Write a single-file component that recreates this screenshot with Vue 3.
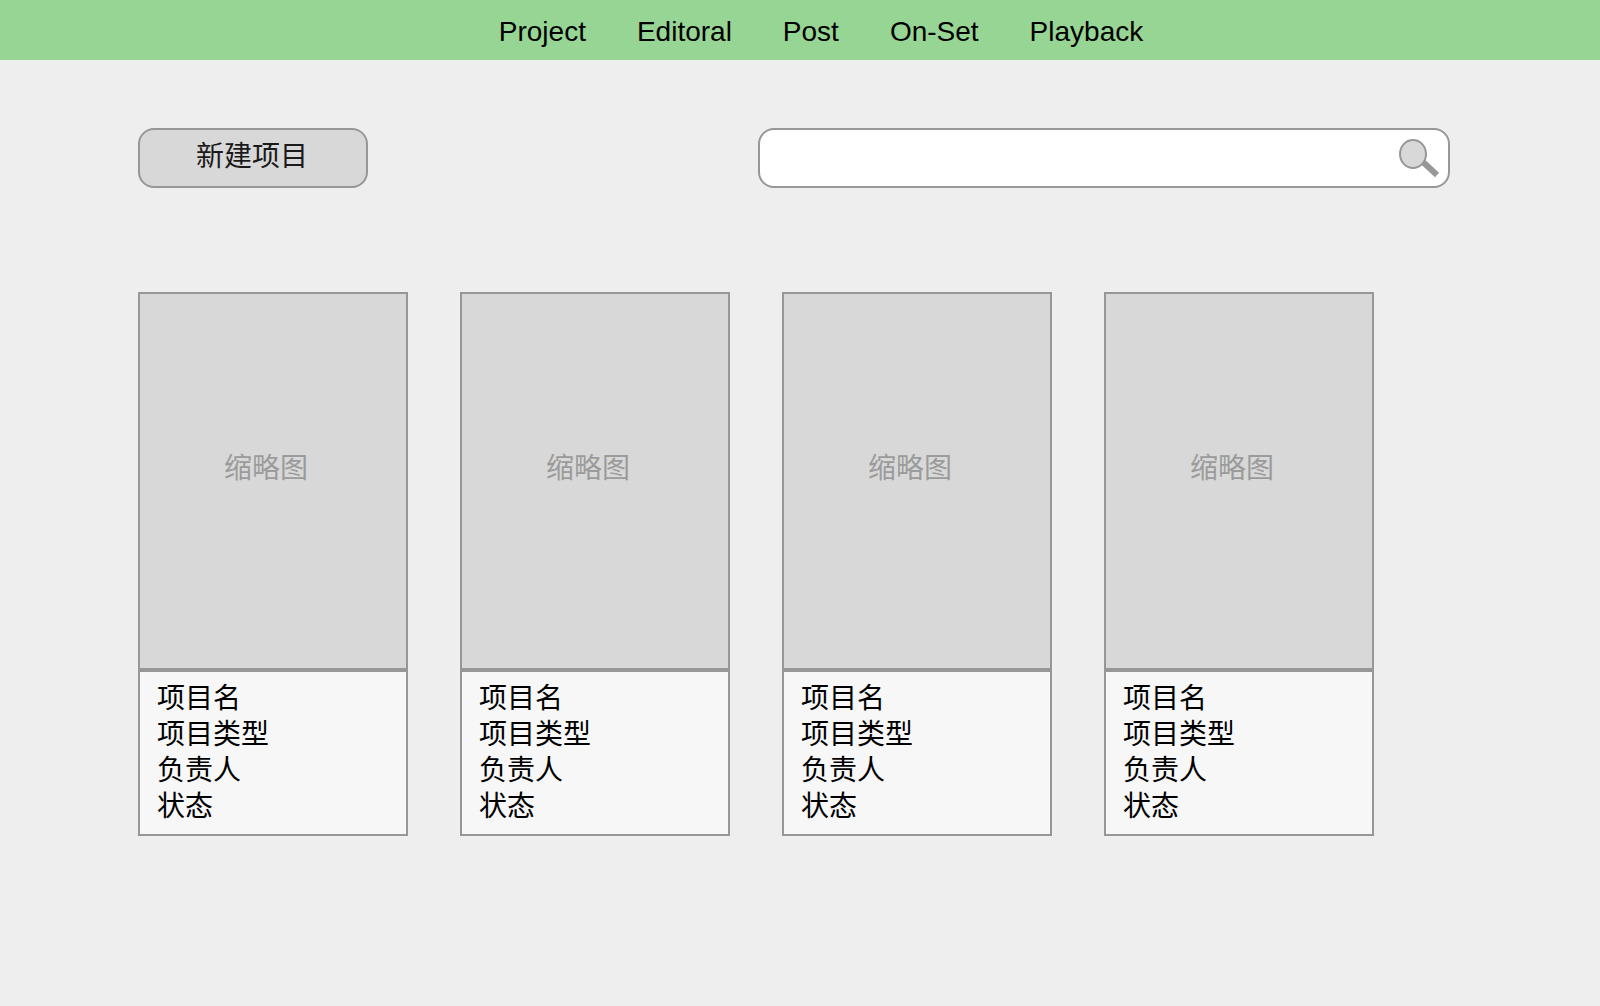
<script setup>
import { ref } from 'vue'

const query = ref('')
const links = ['Project', 'Editoral', 'Post', 'On-Set', 'Playback']
const fields = ['项目名', '项目类型', '负责人', '状态']
const projects = [1, 2, 3, 4]
</script>

<template>
  <div class="page">
    <header class="topbar">
      <nav class="nav">
        <a v-for="link in links" :key="link" href="#">{{ link }}</a>
      </nav>
    </header>

    <main class="content">
      <div class="toolbar">
        <button type="button" class="create">新建项目</button>
        <form class="search" role="search" @submit.prevent>
          <input v-model="query" type="text" aria-label="搜索" />
          <button type="submit" class="search-button" aria-label="搜索">
            <svg width="42" height="42" viewBox="0 0 42 42" aria-hidden="true">
              <path d="M25 25 L39 38" stroke="#979797" stroke-width="6" />
              <ellipse cx="15" cy="17" rx="13" ry="14" fill="#d8d8d8" stroke="#979797" stroke-width="2" />
            </svg>
          </button>
        </form>
      </div>

      <section class="cards">
        <article v-for="project in projects" :key="project" class="card">
          <div class="thumb">缩略图</div>
          <ul class="info">
            <li v-for="field in fields" :key="field">{{ field }}</li>
          </ul>
        </article>
      </section>
    </main>
  </div>
</template>

<style>
html,
body {
  background: #eeeeee;
}
</style>

<style scoped>
.page {
  font-family: "Liberation Sans", "Noto Sans CJK SC", sans-serif;
  font-size: 28px;
  line-height: 36px;
  color: #000;
}

.page * {
  box-sizing: border-box;
}

.topbar {
  display: flex;
  justify-content: center;
  padding: 14px 0 10px 42px;
  background: #97d594;
}

.nav {
  display: flex;
  gap: 51px;
}

.nav a {
  color: inherit;
  text-decoration: none;
}

.content {
  padding: 68px 150px 40px 138px;
}

.toolbar {
  display: flex;
  gap: 390px;
}

.create {
  flex: none;
  width: 230px;
  height: 60px;
  padding: 0 2px 2px 0;
  border: 2px solid #979797;
  border-radius: 16px;
  background: #d8d8d8;
  color: #1a1a1a;
  font: inherit;
}

.search {
  display: flex;
  flex: 1;
  align-items: center;
  min-width: 0;
  height: 60px;
  padding-right: 8px;
  border: 2px solid #979797;
  border-radius: 16px;
  background: #fff;
}

.search input {
  flex: 1;
  min-width: 0;
  height: 100%;
  padding: 0 16px;
  border: 0;
  outline: 0;
  background: transparent;
  font: inherit;
}

.search-button {
  display: flex;
  padding: 0;
  border: 0;
  background: transparent;
}

.cards {
  display: grid;
  grid-template-columns: repeat(4, 1fr);
  gap: 52px;
  margin: 104px 76px 0 0;
}

.card {
  border: 2px solid #979797;
  background: #f7f7f7;
}

.thumb {
  display: flex;
  align-items: center;
  justify-content: center;
  height: 378px;
  padding: 0 14px 24px 0;
  border-bottom: 4px solid #979797;
  background: #d8d8d8;
  color: #9b9b9b;
}

.info {
  margin: 0;
  padding: 9px 17px;
  list-style: none;
}
</style>
